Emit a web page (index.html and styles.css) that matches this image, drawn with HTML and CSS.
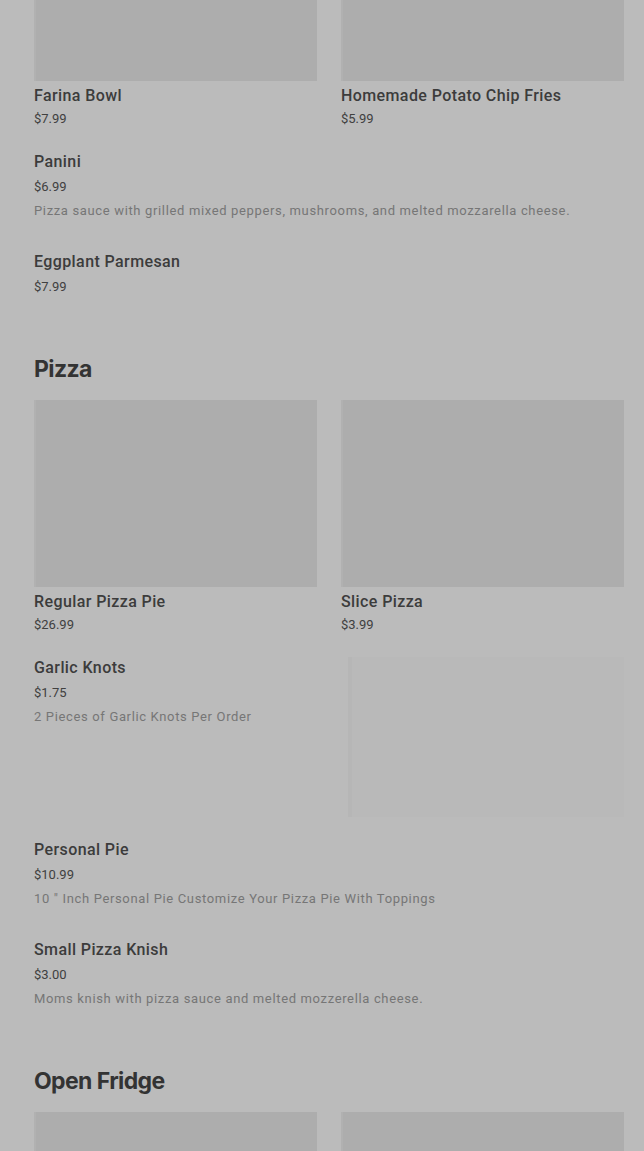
FILE: index.html
```html
<!DOCTYPE html>
<html lang="en">
<head>
    <meta charset="UTF-8">
    <meta name="viewport" content="width=device-width, initial-scale=1.0">
    <title>Menu</title>
    <link rel="stylesheet" href="styles.css">
</head>
<body>
    <div class="menu">

        <!-- Breakfast (scrolled past the top) -->
        <section class="section first">
            <div class="card-grid">
                <div class="card">
                    <div class="card-img"></div>
                    <div class="name">Farina Bowl</div>
                    <div class="price">$7.99</div>
                </div>
                <div class="card">
                    <div class="card-img"></div>
                    <div class="name">Homemade Potato Chip Fries</div>
                    <div class="price">$5.99</div>
                </div>
            </div>

            <div class="item">
                <div class="item-text">
                    <div class="name">Panini</div>
                    <div class="price">$6.99</div>
                    <div class="desc">Pizza sauce with grilled mixed peppers, mushrooms, and melted mozzarella cheese.</div>
                </div>
            </div>
            <div class="item">
                <div class="item-text">
                    <div class="name">Eggplant Parmesan</div>
                    <div class="price">$7.99</div>
                </div>
            </div>
        </section>

        <!-- Pizza -->
        <section class="section">
            <h2>Pizza</h2>
            <div class="card-grid">
                <div class="card">
                    <div class="card-img"></div>
                    <div class="name">Regular Pizza Pie</div>
                    <div class="price">$26.99</div>
                </div>
                <div class="card">
                    <div class="card-img"></div>
                    <div class="name">Slice Pizza</div>
                    <div class="price">$3.99</div>
                </div>
            </div>

            <div class="item has-photo">
                <div class="item-text">
                    <div class="name">Garlic Knots</div>
                    <div class="price">$1.75</div>
                    <div class="desc">2 Pieces of Garlic Knots Per Order</div>
                </div>
                <div class="item-img"></div>
            </div>
            <div class="item">
                <div class="item-text">
                    <div class="name">Personal Pie</div>
                    <div class="price">$10.99</div>
                    <div class="desc">10 " Inch Personal Pie Customize Your Pizza Pie With Toppings</div>
                </div>
            </div>
            <div class="item">
                <div class="item-text">
                    <div class="name">Small Pizza Knish</div>
                    <div class="price">$3.00</div>
                    <div class="desc">Moms knish with pizza sauce and melted mozzerella cheese.</div>
                </div>
            </div>
        </section>

        <!-- Open Fridge -->
        <section class="section">
            <h2>Open Fridge</h2>
            <div class="card-grid">
                <div class="card">
                    <div class="card-img"></div>
                </div>
                <div class="card">
                    <div class="card-img"></div>
                </div>
            </div>
        </section>

    </div>
</body>
</html>
```

FILE: styles.css
```css
body {
    margin: 0;
    background-color: #bbbbbb;
    font-family: Roboto, "Liberation Sans", sans-serif;
    overflow: hidden;
}

.menu {
    padding: 0 20px 0 34px;
}

.section {
    padding-top: 26px;
}

.section.first {
    padding-top: 0;
    margin-top: -106px;
}

h2 {
    margin: 0 0 15px;
    font-family: Inter, "Liberation Sans", sans-serif;
    font-size: 23px;
    font-weight: 700;
    line-height: 32px;
    letter-spacing: -0.6px;
    color: #333333;
}

.card-grid {
    display: grid;
    grid-template-columns: 1fr 1fr;
    gap: 24px;
    margin-bottom: 23px;
}

.card-img {
    height: 187px;
    background-color: #adadad;
    border-left: 2px solid #b1b1b1;
}

.card .name {
    margin-top: 5px;
}

.name {
    font-size: 16px;
    font-weight: 500;
    line-height: 20px;
    letter-spacing: 0.4px;
    color: #3c3c3c;
}

.price {
    margin-top: 4px;
    font-size: 13px;
    line-height: 18px;
    color: #404040;
}

.item .price {
    margin-top: 6px;
}

.desc {
    margin-top: 6px;
    font-size: 13px;
    line-height: 18px;
    letter-spacing: 0.65px;
    color: #767676;
}

.item {
    display: flex;
    justify-content: space-between;
    margin-bottom: 31px;
}

.item .item-text {
    padding-top: 1px;
}

.item.has-photo {
    margin-bottom: 22px;
}

.item-img {
    width: 276px;
    height: 160px;
    background-color: #b9b9b9;
    border-left: 4px solid #b6b6b6;
    box-sizing: border-box;
}
```
